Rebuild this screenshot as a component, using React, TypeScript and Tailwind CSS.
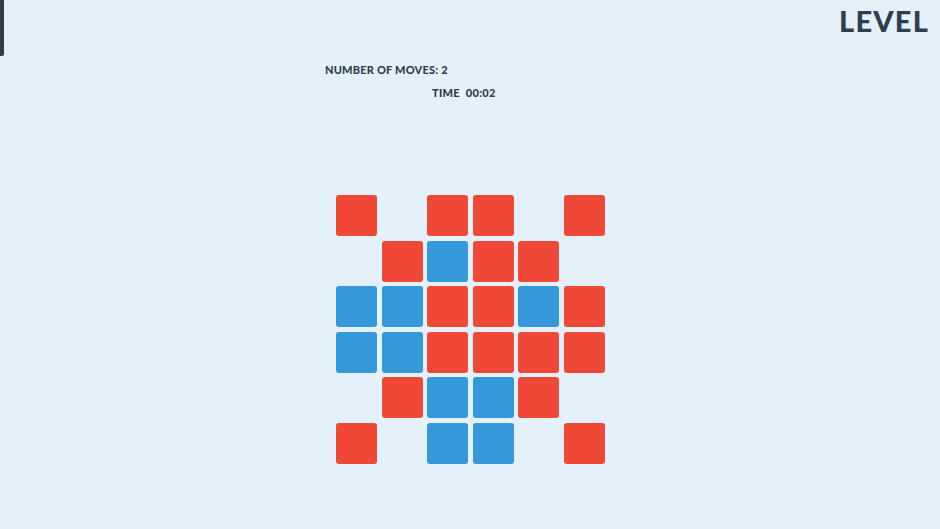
const grid = [
  'R.RR.R',
  '.RBRR.',
  'BBRRBR',
  'BBRRRR',
  '.RBBR.',
  'R.BB.R',
]

function Tile({ kind }: { kind: string }) {
  if (kind === 'R') return <div className="h-[41px] w-[41px] rounded-[3px] bg-[#ef4836]" />
  if (kind === 'B') return <div className="h-[41px] w-[41px] rounded-[3px] bg-[#3498db]" />
  return <div className="h-[41px] w-[41px]" />
}

export default function App() {
  return (
    <div className="flex h-[529px] w-[940px] flex-col overflow-hidden bg-[#e4f1fb] font-['Lato',sans-serif] text-[#2c3e50]">
      {/* header */}
      <div className="flex items-start justify-between">
        <div className="h-[56px] w-[4px] rounded-br-[2px] bg-[#2c3e50]" />
        <div className="mt-[4px] mr-[11px] text-[29px] leading-[34px] font-black tracking-[1.2px]">LEVEL</div>
      </div>

      {/* stats */}
      <div className="mt-[7px] pl-[325px] text-[11px] leading-[14px] font-black tracking-[0.2px]">
        NUMBER OF MOVES: 2
      </div>
      <div className="mt-[9px] pl-[432px] text-[11px] leading-[14px] font-black tracking-[0.3px]">
        TIME&nbsp;&nbsp;00:02
      </div>

      {/* board */}
      <div className="mx-auto mt-[95px] grid grid-cols-6 gap-[4.5px] pl-[1px]">
        {grid.flatMap((row, r) =>
          row.split('').map((c, i) => <Tile key={`${r}-${i}`} kind={c} />)
        )}
      </div>
    </div>
  )
}
